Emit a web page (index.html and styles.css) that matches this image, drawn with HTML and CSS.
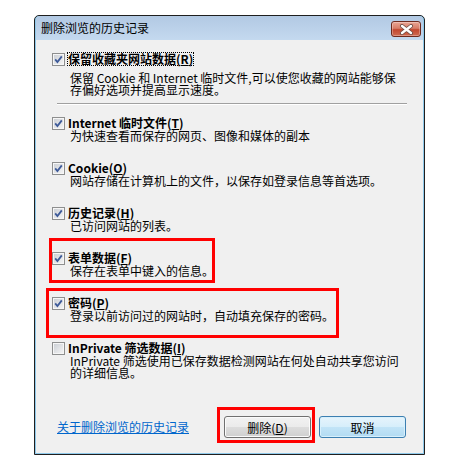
FILE: index.html
```html
<!DOCTYPE html>
<html lang="zh-CN">
<head>
    <meta charset="UTF-8">
    <title>删除浏览的历史记录</title>
    <link rel="stylesheet" href="styles.css">
</head>
<body>
    <div class="window">
        <div class="titlebar">
            <span class="title">删除浏览的历史记录</span>
            <span class="close">
                <svg width="15" height="11" viewBox="0 0 15 11">
                    <path d="M3 2 L12 9 M12 2 L3 9" stroke="#6a4a43" stroke-width="4" stroke-linecap="round"/>
                    <path d="M3 2 L12 9 M12 2 L3 9" stroke="#fff" stroke-width="2.4" stroke-linecap="round"/>
                </svg>
            </span>
        </div>

        <div class="content">
            <!-- 保留收藏夹 -->
            <div class="item first">
                <div class="row">
                    <span class="box"><svg class="tick" viewBox="0 0 11 11"><path d="M2.2 5.4 L4.4 8 L8.8 2.4"/></svg></span>
                    <span class="label focus">保留收藏夹网站数据(<u>R</u>)</span>
                </div>
                <div class="desc">保留 Cookie 和 Internet 临时文件,可以使您收藏的网站能够保<br>存偏好选项并提高显示速度。</div>
            </div>

            <div class="sep"></div>

            <div class="item">
                <div class="row">
                    <span class="box"><svg class="tick" viewBox="0 0 11 11"><path d="M2.2 5.4 L4.4 8 L8.8 2.4"/></svg></span>
                    <span class="label">Internet 临时文件(<u>T</u>)</span>
                </div>
                <div class="desc">为快速查看而保存的网页、图像和媒体的副本</div>
            </div>

            <div class="item">
                <div class="row">
                    <span class="box"><svg class="tick" viewBox="0 0 11 11"><path d="M2.2 5.4 L4.4 8 L8.8 2.4"/></svg></span>
                    <span class="label">Cookie(<u>O</u>)</span>
                </div>
                <div class="desc">网站存储在计算机上的文件，以保存如登录信息等首选项。</div>
            </div>

            <div class="item">
                <div class="row">
                    <span class="box"><svg class="tick" viewBox="0 0 11 11"><path d="M2.2 5.4 L4.4 8 L8.8 2.4"/></svg></span>
                    <span class="label">历史记录(<u>H</u>)</span>
                </div>
                <div class="desc">已访问网站的列表。</div>
            </div>

            <div class="item marked">
                <div class="row">
                    <span class="box"><svg class="tick" viewBox="0 0 11 11"><path d="M2.2 5.4 L4.4 8 L8.8 2.4"/></svg></span>
                    <span class="label">表单数据(<u>F</u>)</span>
                </div>
                <div class="desc">保存在表单中键入的信息。</div>
                <span class="mark mark-form"></span>
            </div>

            <div class="item marked">
                <div class="row">
                    <span class="box"><svg class="tick" viewBox="0 0 11 11"><path d="M2.2 5.4 L4.4 8 L8.8 2.4"/></svg></span>
                    <span class="label">密码(<u>P</u>)</span>
                </div>
                <div class="desc">登录以前访问过的网站时，自动填充保存的密码。</div>
                <span class="mark mark-pass"></span>
            </div>

            <div class="item">
                <div class="row">
                    <span class="box"></span>
                    <span class="label">InPrivate 筛选数据(<u>I</u>)</span>
                </div>
                <div class="desc">InPrivate 筛选使用已保存数据检测网站在何处自动共享您访问<br>的详细信息。</div>
            </div>

            <div class="footer">
                <a class="link" href="#">关于删除浏览的历史记录</a>
                <div class="buttons">
                    <span class="btn-wrap">
                        <button class="btn">删除(<u>D</u>)</button>
                        <span class="mark mark-btn"></span>
                    </span>
                    <button class="btn default">取消</button>
                </div>
            </div>
        </div>
    </div>
</body>
</html>
```

FILE: styles.css
```css
body {
    margin: 0;
    background: #fff;
    font-family: "Noto Sans CJK SC", "Liberation Sans", sans-serif;
    font-size: 12px;
    color: #000;
}

.window {
    position: relative;
    margin: 15px 0 0 34px;
    width: 391px;
    height: 440px;
    box-sizing: border-box;
    border: 1px solid #1f1f1f;
    border-radius: 5px 5px 0 0;
    background: #8fc9ea;
    padding: 0 1px 1px;
    display: flex;
    flex-direction: column;
}

.titlebar {
    height: 24px;
    display: flex;
    align-items: center;
    justify-content: space-between;
    padding: 0 2px 0 5px;
    background: linear-gradient(#b2c9e3, #c4d9ef);
    border-radius: 4px 4px 0 0;
}

.title {
    line-height: 16px;
}

.close {
    margin-top: 2px;
    width: 30px;
    height: 16px;
    box-sizing: border-box;
    border: 1px solid #6e2a1e;
    border-radius: 3px;
    background: linear-gradient(#e9a594, #d77d68 45%, #c2472f 55%, #cf6b52);
    box-shadow: inset 0 0 0 1px rgba(255, 255, 255, 0.3);
    display: flex;
    align-items: center;
    justify-content: center;
}

.content {
    flex: 1;
    background: #f0f0f0;
    padding: 12px 16px 0;
}

.item + .item {
    margin-top: 19px;
}

.row {
    display: flex;
    align-items: center;
    height: 14px;
    line-height: 14px;
}

.box {
    flex: none;
    width: 13px;
    height: 13px;
    box-sizing: border-box;
    margin-right: 3px;
    border: 1px solid #8e8f8f;
    background: linear-gradient(135deg, #c9cdd3, #f7f7f7);
    box-shadow: inset 0 0 0 1px #f6f6f6;
}

.tick {
    display: block;
    width: 11px;
    height: 11px;
}

.tick path {
    fill: none;
    stroke: #3d5a99;
    stroke-width: 1.8;
}

.label {
    font-weight: 700;
}

.focus {
    line-height: 12px;
    height: 12px;
    outline: 1px dotted #000;
}

.desc {
    padding-left: 18px;
    line-height: 12px;
    white-space: nowrap;
}

.first .desc {
    margin-top: 6px;
}

.sep {
    margin: 7px 0 11px 5px;
    border-top: 1px solid #a0a0a0;
    border-bottom: 1px solid #fff;
}

.marked {
    position: relative;
}

.mark {
    position: absolute;
    box-sizing: border-box;
    border: 3px solid #ff0000;
    pointer-events: none;
}

.mark-form {
    top: -13px;
    left: -3px;
    width: 166px;
    height: 45px;
}

.mark-pass {
    top: -8px;
    left: -6px;
    width: 293px;
    height: 50px;
}

.footer {
    margin-top: 37px;
    margin-right: 1px;
    padding-left: 5px;
    display: flex;
    align-items: center;
}

.link {
    color: #0066cc;
    text-decoration: underline;
    line-height: 14px;
}

.buttons {
    margin-left: auto;
    display: flex;
    gap: 8px;
}

.btn-wrap {
    position: relative;
    display: flex;
}

.mark-btn {
    top: -9px;
    left: -7px;
    width: 98px;
    height: 36px;
}

.btn {
    width: 87px;
    height: 22px;
    padding: 0;
    border: 1px solid #707070;
    border-radius: 3px;
    font: 12px "Noto Sans CJK SC", sans-serif;
    color: #000;
    background: linear-gradient(#f2f2f2, #ebebeb 50%, #dddddd 50%, #cfcfcf);
    box-shadow: inset 0 0 0 1px #fbfbfb;
}

.btn.default {
    border-color: #3c7fb1;
    background: linear-gradient(#e6f4fc, #d6eefb 50%, #c2e4f7 50%, #b2dbf2);
    box-shadow: inset 0 0 0 1px #d8f0fc;
}
```
